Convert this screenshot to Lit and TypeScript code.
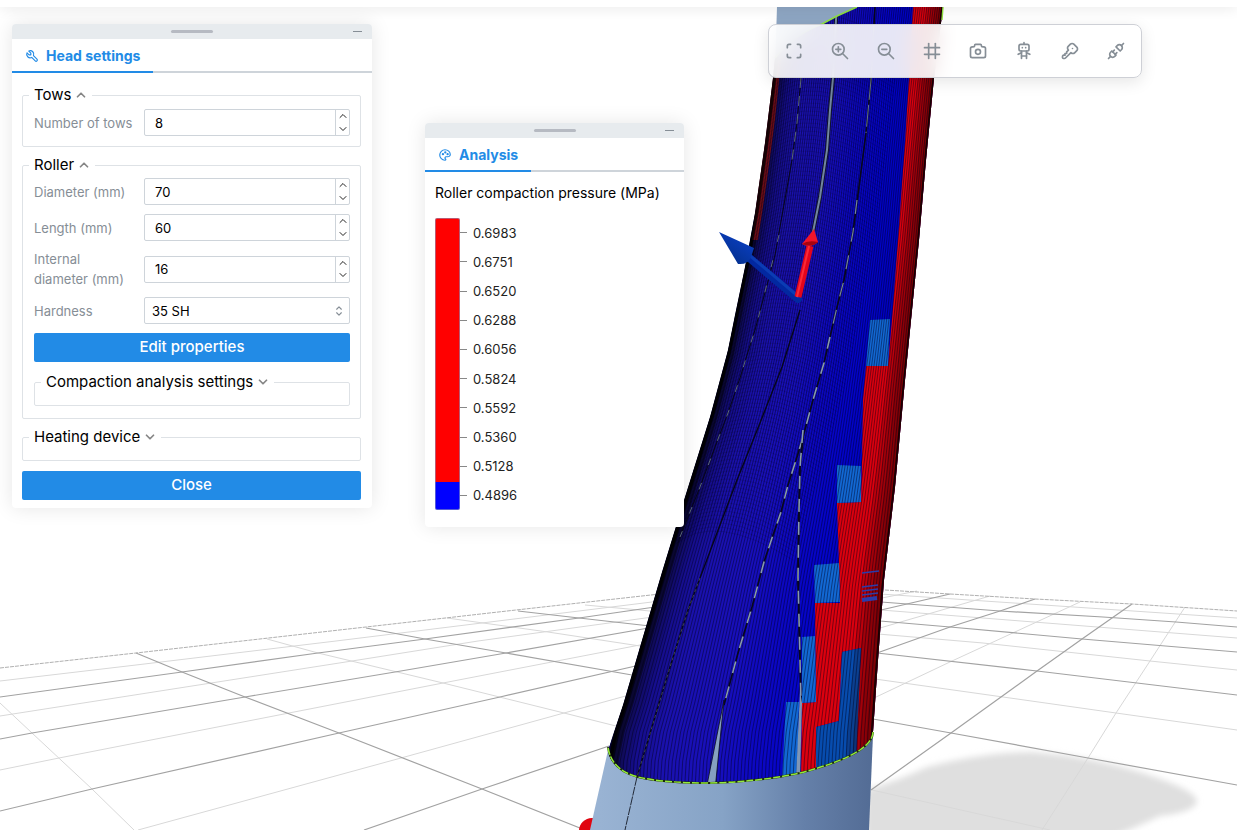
import { LitElement, html, css, svg } from "lit";
import { customElement, property } from "lit/decorators.js";

type Pt = [number, number];

const ICONS: Record<string, string[]> = {
  maximize: ["M4 8v-2a2 2 0 0 1 2-2h2", "M4 16v2a2 2 0 0 0 2 2h2", "M16 4h2a2 2 0 0 1 2 2v2", "M16 20h2a2 2 0 0 0 2-2v-2"],
  zoomIn: ["M3 10a7 7 0 1 0 14 0a7 7 0 1 0-14 0", "M7 10h6", "M10 7v6", "M21 21l-6-6"],
  zoomOut: ["M3 10a7 7 0 1 0 14 0a7 7 0 1 0-14 0", "M7 10h6", "M21 21l-6-6"],
  grid: ["M3 8h18", "M3 16h18", "M8 3v18", "M16 3v18"],
  camera: [
    "M5 7h1a2 2 0 0 0 2-2a1 1 0 0 1 1-1h6a1 1 0 0 1 1 1a2 2 0 0 0 2 2h1a2 2 0 0 1 2 2v9a2 2 0 0 1-2 2h-14a2 2 0 0 1-2-2v-9a2 2 0 0 1 2-2",
    "M9 13a3 3 0 1 0 6 0a3 3 0 0 0-6 0",
  ],
  robot: [
    "M6 6a2 2 0 0 1 2-2h8a2 2 0 0 1 2 2v4a2 2 0 0 1-2 2h-8a2 2 0 0 1-2-2z",
    "M12 2v2", "M9 12v9", "M15 12v9", "M5 16l4-2", "M15 14l4 2", "M9 18h6", "M10 8v.01", "M14 8v.01",
  ],
  key: [
    "M16.555 3.843l3.602 3.602a2.877 2.877 0 0 1 0 4.069l-2.643 2.643a2.877 2.877 0 0 1-4.069 0l-.301-.301l-6.558 6.558a2 2 0 0 1-1.239.578l-.175.008h-1.172a1 1 0 0 1-.993-.883l-.007-.117v-1.172a2 2 0 0 1 .467-1.284l.119-.13l.414-.414h2v-2h2v-2l2.144-2.144l-.301-.301a2.877 2.877 0 0 1 0-4.069l2.643-2.643a2.877 2.877 0 0 1 4.069 0z",
    "M15 9h.01",
  ],
  plug: [
    "M7 12l5 5l-1.5 1.5a3.536 3.536 0 1 1-5-5l1.5-1.5z",
    "M17 12l-5-5l1.5-1.5a3.536 3.536 0 1 1 5 5l-1.5 1.5z",
    "M3 21l2.5-2.5", "M18.5 5.5l2.5-2.5", "M10 11l-2 2", "M13 14l-2 2",
  ],
  tool: ["M7 10h3v-3l-3.5-3.5a6 6 0 0 1 8 8l6 6a2 2 0 0 1-3 3l-6-6a6 6 0 0 1-8-8l3.5 3.5"],
  palette: [
    "M12 21a9 9 0 0 1 0-18c4.97 0 9 3.582 9 8c0 1.06-.474 2.078-1.318 2.828c-.844.75-1.989 1.172-3.182 1.172h-2.5a2 2 0 0 0-1 3.75a1.3 1.3 0 0 1-1 2.25",
    "M7.5 10.5a1 1 0 1 0 2 0a1 1 0 1 0-2 0", "M11.5 7.5a1 1 0 1 0 2 0a1 1 0 1 0-2 0", "M15.5 10.5a1 1 0 1 0 2 0a1 1 0 1 0-2 0",
  ],
  up: ["M6 15l6-6l6 6"],
  down: ["M6 9l6 6l6-6"],
  selector: ["M8 9l4-4l4 4", "M16 15l-4 4l-4-4"],
};

const icon = (name: string, size: number, stroke = 2) => html`
  <svg width=${size} height=${size} viewBox="0 0 24 24" fill="none" stroke="currentColor"
    stroke-width=${stroke} stroke-linecap="round" stroke-linejoin="round" aria-hidden="true">
    ${ICONS[name].map((d) => svg`<path d=${d}></path>`)}
  </svg>`;

/* ---------- 3D viewport ---------- */

const LEFT_EDGE: Pt[] = [[779, 7], [776, 50], [773, 78], [765, 143], [755, 213], [745, 267], [735, 315], [728, 350], [710, 417], [685, 497], [662, 572], [640, 647], [623, 705], [609, 748], [606, 790]];
const RIGHT_EDGE: Pt[] = [[943, 7], [934, 78], [926, 160], [919, 240], [913, 300], [905, 380], [895, 487], [884, 580], [878, 660], [873, 732], [871, 790]];

const xAt = (edge: Pt[], y: number): number => {
  for (let i = 1; i < edge.length; i++) {
    const [x0, y0] = edge[i - 1];
    const [x1, y1] = edge[i];
    if (y <= y1) return x0 + ((x1 - x0) * (y - y0)) / (y1 - y0);
  }
  return edge[edge.length - 1][0];
};

const LEVELS = Array.from({ length: 28 }, (_, i) => 7 + i * 29);

const fiber = (t: number): Pt[] =>
  LEVELS.map((y) => {
    const l = xAt(LEFT_EDGE, y);
    const r = xAt(RIGHT_EDGE, y);
    return [Math.round((l + (r - l) * t) * 10) / 10, y];
  });

const points = (p: Pt[]) => p.map((q) => q.join(",")).join(" ");

const SHADES: [number, string][] = [
  [0, "#000005"], [0.02, "#07051c"], [0.05, "#100b5c"], [0.1, "#150e8c"], [0.2, "#1a11ae"], [0.4, "#180fbc"],
  [0.55, "#0d08c2"], [0.7, "#0404ca"], [0.85, "#0002c4"], [1, "#0000a0"],
];

const shade = (t: number): string => {
  let i = 1;
  while (SHADES[i][0] < t) i++;
  const [t0, a] = SHADES[i - 1];
  const [t1, b] = SHADES[i];
  const k = (t - t0) / (t1 - t0);
  const ch = (s: string, n: number) => parseInt(s.slice(1 + n * 2, 3 + n * 2), 16);
  return `rgb(${[0, 1, 2].map((n) => Math.round(ch(a, n) + (ch(b, n) - ch(a, n)) * k)).join(",")})`;
};

const GRID_DARK = [
  "0,697 182,672 318,653 425,639 579,618 655,607",
  "0,739 32,733 245,697 395,672 506,653 660,626",
  "0,811 92,789 339,733 500,697 640,665",
  "364,830 482,789 609,746",
  "136,653 182,672 245,697 339,733 482,789 585,830",
  "366,628 425,639 506,653 632,675",
  "518,611 579,618 650,626",
  "881,602 1000,611 1103,617 1176,622 1237,627",
  "880,621 950,627 1082,639 1237,652",
  "877,653 1037,671 1237,695",
  "873,719 951,733 1088,758 1237,785",
  "871,790 951,733 1037,671 1082,639 1132,604",
  "877,653 950,627 1000,611 1035,599",
  "881,610 950,594",
];
const GRID_LIGHT = [
  "0,681 136,665 336,641 660,601",
  "0,716 352,661 478,641 660,616",
  "0,770 59,758 289,713 443,683 645,644",
  "138,830 401,758 564,713 640,692",
  "0,703 32,733 92,789 134,830",
  "267,639 318,653 443,683 564,713 620,727",
  "447,618 548,632 640,646",
  "585,605 650,611",
  "880,594 1237,618",
  "881,610 1237,638",
  "878,634 983,643 1150,661 1237,670",
  "875,679 1003,697 1116,713 1237,730",
  "1042,830 1088,758 1116,713 1150,661 1185,607",
  "874,698 952,661 1080,602",
  "880,628 990,596",
  "882,598 917,591",
  "872,790 1050,830",
];

const BODY =
  "M857 7L943 7L934 78L926 160L919 240L913 300L905 380L895 487L884 580L878 660L873 732Q873 741 860 750Q842 762 800 773Q758 782 710 783Q664 783 638 777Q611 770 608 750L623 705L640 647L662 572L685 497L710 417L728 350L735 315L745 267L755 213L765 143L773 78L775 58Q795 34 822 24L837 16Z";

const RED =
  "913,7 909,78 905,143 898,240 892,320 888,366 866,366 863,400 862,463 861,502 837,503 839,563 840,603 815,603 816,702 802,703 801,780 816,780 816,727 839,721 842,652 861,648 856,760 880,760 950,400 950,7";

const BLUE_PATCHES = [
  "870,320 890,319 888,366 866,366",
  "837,465 861,466 861,502 837,503",
  "814,565 839,563 840,602 815,603",
  "802,637 815,636 816,702 802,703",
  "786,702 799,702 797,780 782,780",
];

const scene = () => svg`
  <defs>
    <clipPath id="skin"><path d=${BODY}></path></clipPath>
    <linearGradient id="mandrel" x1="600" y1="0" x2="872" y2="0" gradientUnits="userSpaceOnUse">
      <stop offset="0" stop-color="#99b3d3"></stop><stop offset="0.45" stop-color="#86a3c6"></stop>
      <stop offset="0.75" stop-color="#6580a9"></stop><stop offset="1" stop-color="#536c95"></stop>
    </linearGradient>
    <linearGradient id="cone" x1="752" y1="240" x2="735" y2="264" gradientUnits="userSpaceOnUse">
      <stop offset="0" stop-color="#0a3fc4"></stop><stop offset="1" stop-color="#04308f"></stop>
    </linearGradient>
    <filter id="soft"><feGaussianBlur stdDeviation="3"></feGaussianBlur></filter>
  </defs>
  <path d="M866 790Q897 781 927 767Q985 752 1033 752Q1090 756 1143 773Q1196 790 1197 801Q1196 812 1160 816Q1130 830 1105 840L866 840Z" fill="#dfdfdf" filter="url(#soft)"></path>
  <g fill="none">
    ${GRID_LIGHT.map((p) => svg`<polyline points=${p} stroke="#d8d8d8"></polyline>`)}
    ${GRID_DARK.map((p) => svg`<polyline points=${p} stroke="#a2a2a2" stroke-width="1.2"></polyline>`)}
    <polyline points="0,668 136,653 366,627 516,610 660,594" stroke="#b0b0b0" stroke-dasharray="4 1"></polyline>
    <polyline points="885,590 950,594 1035,599 1132,604 1237,611" stroke="#b0b0b0" stroke-dasharray="4 1"></polyline>
  </g>
  <circle cx="592" cy="831" r="13" fill="#e00510"></circle>
  <path d="M777 7H860L822 60L775 70Z" fill="#8ea6c3"></path>
  <path d="M609 746L590 830H869L873 735L740 700Z" fill="url(#mandrel)"></path>
  <g clip-path="url(#skin)">
    <path d=${BODY} fill="#0e08a6"></path>
    ${Array.from({ length: 50 }, (_, i) => {
      const a = fiber(i / 50);
      const b = fiber((i + 1) / 50 + 0.004).reverse();
      return svg`<polygon points=${points([...a, ...b])} fill=${shade((i + 0.5) / 50)}></polygon>`;
    })}
    <polygon points="773,60 781,60 775,120 767,180 758,240 752,240 763,143" fill="#8a1010" opacity="0.8"></polygon>
    <polygon points=${RED} fill="#dc000e"></polygon>
    <polygon points="816,727 839,721 842,652 861,648 856,760 816,780" fill="#074cae"></polygon>
    ${BLUE_PATCHES.map((p) => svg`<polygon points=${p} fill="#1268d4"></polygon>`)}
    ${[0.9, 0.925, 0.95, 0.975].map((t) => {
      const a = fiber(t);
      return svg`<polygon points=${points([...a, ...fiber(1.01).reverse()])} fill="#200" opacity="0.17"></polygon>`;
    })}
    <g fill="none" stroke="#000018" stroke-opacity="0.5" stroke-width="0.9">
      ${Array.from({ length: 76 }, (_, i) => svg`<polyline points=${points(fiber((i + 0.5) / 76))}></polyline>`)}
    </g>
    <g stroke="#2b3cac" stroke-width="1.5">
      <path d="M862 573L879 571M862 587L878 585M862 591L878 589M862 595L878 593"></path>
      <path d="M862 600L877 598" stroke-width="4"></path>
    </g>
    <g fill="none" stroke="#000" stroke-opacity="0.16" stroke-width="0.8">
      ${Array.from({ length: 130 }, (_, i) => {
        const y = 20 + i * 4;
        const l = xAt(LEFT_EDGE, y);
        return svg`<path d=${`M${l} ${y + 10}Q${l + 40} ${y - 26} ${l + 120} ${y + 24}`}></path>`;
      })}
    </g>
    <polyline points=${points(fiber(0.004))} fill="none" stroke="#000" stroke-width="5" stroke-opacity="0.75"></polyline>
    <polyline points=${points(fiber(0.998))} fill="none" stroke="#000" stroke-width="3" stroke-opacity="0.7"></polyline>
    <g fill="none">
      <polyline points="837,7 836,20 833,78 830,110 827,150 820,197 813,232" stroke="#10122e" stroke-width="4"></polyline>
      <polyline points="837,7 836,20 833,78 830,110 827,150 820,197 813,232" stroke="#71859f" stroke-width="2"></polyline>
      <polyline points="875,7 871,80 866,133 853,232 844,280 838,303 830,337 824,363 813,400 803,437 797,457 788,485 781,512 772,538 764,562 752,607 738,653 724,705" stroke="#08081c" stroke-width="1.6"></polyline>
      <polyline points="874,24 871,80 866,133" stroke="#66758a" stroke-dasharray="22 5"></polyline>
      <polyline points="857,200 853,232 844,280 838,303 830,337" stroke="#76869c" stroke-width="1.2" stroke-dasharray="14 14"></polyline>
      <polyline points="830,337 824,363 813,400 803,437 797,457 788,485 781,512 772,538 764,562 752,607 738,653 724,705" stroke="#8799ae" stroke-width="1.6" stroke-dasharray="12 14"></polyline>
      <polyline points="803,437 800,467 799,510 798,577 800,660 801,703" stroke="#08081c" stroke-width="2"></polyline>
      <polyline points="803,430 800,467 799,510 798,577 800,660 801,703" stroke="#8799ae" stroke-width="1.6" stroke-dasharray="13 10"></polyline>
      <polyline points="801,78 797,123 792,160 775,255 763,300 755,330 747,355 740,378 728,413 715,447 700,487 680,537" stroke="#070718"></polyline>
      <polyline points="801,78 797,123 792,160" stroke="#5c6880" stroke-dasharray="10 8"></polyline>
      <polyline points="779,235 763,300 755,330 747,355 740,378 728,413 715,447 700,487 680,537" stroke="#5c6880" stroke-dasharray="7 19"></polyline>
      <polyline points="800,310 782,367 760,423 737,480 700,578 688,610 670,667 637,777" stroke="#06061a" stroke-width="1.4"></polyline>
      <polyline points="700,578 688,610 670,667 637,777" stroke="#4c5460" stroke-width="0.8" stroke-dasharray="3 3"></polyline>
    </g>
    <polygon points="724,700 706,790 715,790" fill="#86a0c0" stroke="#0a0a24" stroke-width="0.8"></polygon>
    <polygon points="800,690 802,703 800,780 796,780" fill="#7f96b4"></polygon>
  </g>
  <path d="M637 777L625 830" fill="none" stroke="#222a38" stroke-dasharray="9 1"></path>
  <path d="M873 732Q873 741 860 750Q842 762 800 773Q758 782 710 783Q664 783 638 777Q611 770 608 747" fill="none" stroke="#1b2a08" stroke-width="2"></path>
  <path d="M873 732Q873 741 860 750Q842 762 800 773Q758 782 710 783Q664 783 638 777Q611 770 608 747" fill="none" stroke="#93e83a" stroke-width="1.5" stroke-dasharray="7 2"></path>
  <path d="M775 58Q795 34 822 24L837 16L857 7" fill="none" stroke="#8fe040" stroke-width="1.6"></path>
  <path d="M943 7L942 20" stroke="#8fe040" stroke-width="1.4"></path>
  <path d="M747 256L798 299" stroke="#0228a0" stroke-width="8" stroke-linecap="round"></path>
  <path d="M748 254L799 297" stroke="#0b3cb4" stroke-width="3"></path>
  <path d="M798 297L810 246" stroke="#e3051c" stroke-width="7"></path>
  <path d="M797 297L809 246" stroke="#fa2a38" stroke-width="2"></path>
  <path d="M814 229L802 244Q810 249 818 242Z" fill="#f0152a"></path>
  <path d="M802 244Q808 240 818 242Q812 248 802 244Z" fill="#a80310"></path>
  <path d="M719 232L754 248L751 257Q748 265 738 264Z" fill="url(#cone)"></path>
`;

/* ---------- floating window ---------- */

@customElement("float-window")
class FloatWindow extends LitElement {
  @property() heading = "";
  @property() glyph = "tool";

  static styles = css`
    :host { display: block; background: #fff; border-radius: 4px; box-shadow: 0 0 20px rgba(0, 0, 0, 0.1); font-family: Inter, "Liberation Sans", sans-serif; }
    .bar { display: grid; grid-template-columns: 1fr auto 1fr; align-items: center; height: 15px; padding: 0 10px; background: #e7ebee; border-radius: 4px 4px 0 0; }
    .grip { grid-column: 2; width: 42px; height: 3px; border-radius: 2px; background: #b6bac2; }
    .min { justify-self: end; display: flex; align-items: center; width: 9px; height: 12px; padding: 0; border: 0; background: none; }
    .dash { width: 9px; height: 1px; background: #868e96; }
    .tabs { display: flex; height: 32px; border-bottom: 2px solid #ced4da; }
    .tab { display: flex; align-items: center; gap: 7px; box-sizing: border-box; height: 34px; padding: 2px 13px 0; border: 0; border-bottom: 2px solid #228be6; background: none; color: #228be6; font: 700 14px/20px Inter, "Liberation Sans", sans-serif; }
    .body { padding: 12px 11px 8px 10px; }
  `;

  render() {
    return html`
      <div class="bar">
        <span class="grip"></span>
        <button class="min" aria-label="Minimize"><span class="dash"></span></button>
      </div>
      <div class="tabs" role="tablist">
        <button class="tab" role="tab" aria-selected="true">${icon(this.glyph, 14)}${this.heading}</button>
      </div>
      <div class="body"><slot></slot></div>
    `;
  }
}

/* ---------- application ---------- */

const TOOLS: [string, string][] = [
  ["maximize", "Fit view"], ["zoomIn", "Zoom in"], ["zoomOut", "Zoom out"], ["grid", "Toggle grid"],
  ["camera", "Screenshot"], ["robot", "Robot"], ["key", "License"], ["plug", "Connection"],
];

const PRESSURES = ["0.6983", "0.6751", "0.6520", "0.6288", "0.6056", "0.5824", "0.5592", "0.5360", "0.5128", "0.4896"];

@customElement("app-root")
class AppRoot extends LitElement {
  static styles = css`
    :host { display: block; position: relative; min-height: 100vh; overflow: hidden; background: #fff; color: #000; font: 14px/20px Inter, "Liberation Sans", sans-serif; }
    .view { position: absolute; inset: 0; width: 100%; height: 100%; }
    .top { position: relative; height: 7px; background: #fff; box-shadow: 0 0 14px rgba(0, 0, 0, 0.13); }
    .head { position: absolute; left: 12px; top: 24px; width: 360px; }
    .analysis { position: absolute; left: 425px; top: 123px; width: 259px; }
    .tools { position: absolute; right: 95px; top: 24px; display: flex; gap: 12px; padding: 9px 8px; border: 1px solid #ced0d6; border-radius: 8px; background: rgba(255, 255, 255, 0.9); backdrop-filter: blur(10px); box-shadow: 0 4px 16px rgba(0, 0, 0, 0.1); }
    .tool { display: grid; place-items: center; width: 34px; height: 34px; padding: 0; border: 0; background: none; color: #868e96; }

    .group { min-width: 0; margin: 0 0 8px; padding: 0 10px 10px 11px; border: 1px solid #dee2e6; border-radius: 2px; }
    .group.outer { padding-top: 3px; padding-bottom: 12px; }
    .group.inner { margin: 10px 0 0; }
    .group.closed { padding-bottom: 13px; }
    .legend { margin-left: -5px; padding: 0 4px 0 5px; height: 20px; }
    .toggle { display: flex; align-items: center; gap: 3px; height: 20px; padding: 0; border: 0; background: none; color: #000; font: inherit; font-size: 15px; }
    .toggle svg { color: #868686; }
    .rows { display: grid; grid-template-columns: minmax(0, 1fr); gap: 9px; }
    .rows.single { padding-top: 4px; }
    .row { display: grid; grid-template-columns: 100px minmax(0, 1fr); column-gap: 10px; align-items: center; }
    .label { margin: -1px 0; color: #868e96; font-size: 13px; line-height: 20px; }
    .field { display: flex; box-sizing: border-box; height: 27px; border: 1px solid #ced4da; border-radius: 2px; background: #fff; }
    .number { flex: 1; width: 100%; min-width: 0; padding: 0 0 0 10px; border: 0; outline: 0; background: none; color: #000; font: 13px/20px Inter, "Liberation Sans", sans-serif; appearance: textfield; -moz-appearance: textfield; }
    .number::-webkit-inner-spin-button, .number::-webkit-outer-spin-button { -webkit-appearance: none; margin: 0; }
    .steps { display: flex; flex-direction: column; flex: 0 0 13px; border-left: 1px solid #ced4da; }
    .step { flex: 1; display: grid; place-items: center; min-height: 0; padding: 0; border: 0; background: none; color: #222; }
    .pick { position: relative; }
    .select { flex: 1; appearance: none; padding: 0 20px 0 7px; border: 0; background: none; color: #000; font: 13px/20px Inter, "Liberation Sans", sans-serif; }
    .caret { position: absolute; right: 3px; top: 6px; display: flex; color: #868e96; pointer-events: none; }
    .primary { display: block; width: 100%; height: 29px; padding: 0 0 2px; border: 0; border-radius: 2px; background: #228be6; color: #fff; font: 500 15px/20px Inter, "Liberation Sans", sans-serif; }
    .edit { margin-top: 9px; }
    .close { margin-top: 10px; }

    .title { margin: -1px 0 0; font: 400 14px/20px Inter, "Liberation Sans", sans-serif; white-space: nowrap; }
    .scale { display: flex; height: 292px; margin: 15px 0 9px; }
    .ramp { box-sizing: border-box; width: 25px; border: 1px solid rgba(140, 150, 190, 0.6); border-radius: 2px; background: linear-gradient(#f00 90.5%, #00f 90.5%) border-box; }
    .ticks { display: flex; flex-direction: column; margin: 0; padding: 0; list-style: none; font-size: 13px; color: #222; }
    .tick { flex: 1; display: flex; align-items: center; gap: 6px; }
    .mark { width: 7px; height: 1px; background: #888; }
  `;

  private step(id: string, delta: number) {
    const input = this.renderRoot.querySelector<HTMLInputElement>("#" + id);
    if (input) delta > 0 ? input.stepUp() : input.stepDown();
  }

  private numberRow(id: string, label: string, value: number) {
    return html`
      <div class="row">
        <label class="label" for=${id}>${label}</label>
        <div class="field">
          <input class="number" id=${id} type="number" .value=${String(value)} />
          <span class="steps">
            <button class="step" aria-label="Increase" @click=${() => this.step(id, 1)}>${icon("up", 12)}</button>
            <button class="step" aria-label="Decrease" @click=${() => this.step(id, -1)}>${icon("down", 12)}</button>
          </span>
        </div>
      </div>`;
  }

  private legend(text: string, open: boolean) {
    return html`<legend class="legend"><button class="toggle" aria-expanded=${open}>${text}${icon(open ? "up" : "down", 14, 3)}</button></legend>`;
  }

  render() {
    return html`
      <svg class="view" viewBox="0 0 1237 830" preserveAspectRatio="xMidYMid slice" aria-hidden="true">${scene()}</svg>
      <header class="top"></header>

      <nav class="tools" aria-label="View tools">
        ${TOOLS.map(([name, label]) => html`<button class="tool" aria-label=${label}>${icon(name, 20)}</button>`)}
      </nav>

      <float-window class="head" heading="Head settings" glyph="tool">
        <fieldset class="group">
          ${this.legend("Tows", true)}
          <div class="rows single">${this.numberRow("tows", "Number of tows", 8)}</div>
        </fieldset>
        <fieldset class="group outer">
          ${this.legend("Roller", true)}
          <div class="rows">
            ${this.numberRow("diameter", "Diameter (mm)", 70)}
            ${this.numberRow("length", "Length (mm)", 60)}
            ${this.numberRow("inner", "Internal diameter (mm)", 16)}
            <div class="row">
              <label class="label" for="hardness">Hardness</label>
              <div class="field pick">
                <select class="select" id="hardness"><option>35 SH</option></select>
                <span class="caret">${icon("selector", 14)}</span>
              </div>
            </div>
          </div>
          <button class="primary edit">Edit properties</button>
          <fieldset class="group inner closed">${this.legend("Compaction analysis settings", false)}</fieldset>
        </fieldset>
        <fieldset class="group closed">${this.legend("Heating device", false)}</fieldset>
        <button class="primary close">Close</button>
      </float-window>

      <float-window class="analysis" heading="Analysis" glyph="palette">
        <h2 class="title">Roller compaction pressure (MPa)</h2>
        <div class="scale">
          <div class="ramp"></div>
          <ul class="ticks">
            ${PRESSURES.map((p) => html`<li class="tick"><span class="mark"></span>${p}</li>`)}
          </ul>
        </div>
      </float-window>
    `;
  }
}
